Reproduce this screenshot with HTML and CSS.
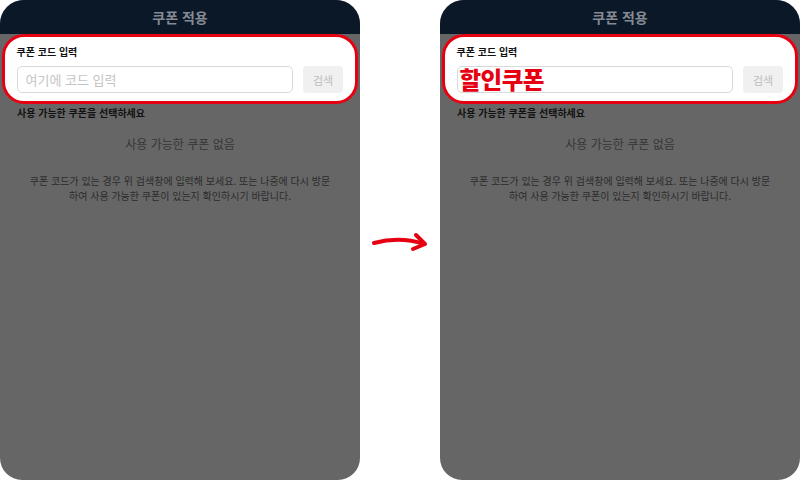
FILE: index.html
```html
<!DOCTYPE html>
<html lang="ko">
<head>
<meta charset="utf-8">
<link rel="stylesheet" href="styles.css">
</head>
<body>
<div class="stage">
  <section class="phone">
    <header class="phone-head">쿠폰 적용</header>
    <div class="code-box">
      <div class="code-label">쿠폰 코드 입력</div>
      <div class="code-row">
        <div class="code-input"><span class="placeholder">여기에 코드 입력</span></div>
        <div class="search-btn">검색</div>
      </div>
    </div>
    <div class="select-title">사용 가능한 쿠폰을 선택하세요</div>
    <div class="empty-title">사용 가능한 쿠폰 없음</div>
    <p class="empty-desc">쿠폰 코드가 있는 경우 위 검색창에 입력해 보세요. 또는 나중에 다시 방문<br>하여 사용 가능한 쿠폰이 있는지 확인하시기 바랍니다.</p>
  </section>
  <div class="arrow-col">
    <svg class="arrow" viewBox="360 220 80 40" width="80" height="40">
      <path d="M374 243 Q400 236 424 244" fill="none" stroke="#e60012" stroke-width="4" stroke-linecap="round"/>
      <path d="M416 235 L425 244 L413 249" fill="none" stroke="#e60012" stroke-width="4" stroke-linecap="round" stroke-linejoin="round"/>
    </svg>
  </div>
  <section class="phone">
    <header class="phone-head">쿠폰 적용</header>
    <div class="code-box">
      <div class="code-label">쿠폰 코드 입력</div>
      <div class="code-row">
        <div class="code-input code-input-filled"><span class="typed">할인쿠폰</span></div>
        <div class="search-btn">검색</div>
      </div>
    </div>
    <div class="select-title">사용 가능한 쿠폰을 선택하세요</div>
    <div class="empty-title">사용 가능한 쿠폰 없음</div>
    <p class="empty-desc">쿠폰 코드가 있는 경우 위 검색창에 입력해 보세요. 또는 나중에 다시 방문<br>하여 사용 가능한 쿠폰이 있는지 확인하시기 바랍니다.</p>
  </section>
</div>
</body>
</html>
```
FILE: styles.css
```css
html, body {
  margin: 0;
  padding: 0;
  background: #ffffff;
}
body {
  width: 800px;
  height: 480px;
  overflow: hidden;
  font-family: "Noto Sans CJK KR", "Noto Sans", sans-serif;
}
.stage {
  display: flex;
  width: 800px;
  height: 480px;
}
.phone {
  width: 360px;
  height: 480px;
  flex: none;
  background: #666666;
  border-radius: 24px 24px 22px 22px;
  overflow: hidden;
  display: flex;
  flex-direction: column;
}
.phone-head {
  height: 34px;
  flex: none;
  background: #0a1828;
  color: #868b93;
  font-size: 14px;
  font-weight: 700;
  display: flex;
  align-items: center;
  justify-content: center;
}
.code-box {
  margin: 0 2px;
  background: #ffffff;
  border: 3.5px solid #e60012;
  border-radius: 22px;
  padding: 8px 12px 8px 11.5px;
}
.code-label {
  font-size: 10px;
  font-weight: 700;
  color: #111111;
  line-height: 14px;
  height: 14px;
}
.code-row {
  display: flex;
  gap: 10px;
  margin-top: 7px;
  height: 27px;
}
.code-input {
  flex: 1;
  border: 1px solid #d9d9d9;
  border-radius: 5px;
  display: flex;
  align-items: center;
  padding: 0 8px;
  box-sizing: border-box;
}
.code-input-filled {
  padding: 0 2px;
}
.placeholder {
  color: #c4c4c4;
  font-size: 13px;
}
.typed {
  color: #e60012;
  font-size: 23.5px;
  font-weight: 900;
  line-height: 27px;
  letter-spacing: -0.5px;
}
.search-btn {
  width: 40px;
  flex: none;
  background: #f0f0f0;
  border-radius: 4px;
  color: #bdbdbd;
  font-size: 11px;
  display: flex;
  align-items: center;
  justify-content: center;
}
.select-title {
  padding: 2px 17px 0;
  font-size: 10px;
  font-weight: 700;
  color: #111111;
  line-height: 14px;
}
.empty-title {
  margin-top: 16px;
  text-align: center;
  font-size: 12px;
  color: #363636;
  line-height: 16px;
}
.empty-desc {
  margin: 22px 0 0;
  text-align: center;
  font-size: 10px;
  line-height: 14.6px;
  color: #2c2c2c;
}
.arrow-col {
  width: 80px;
  flex: none;
  display: flex;
  align-items: center;
}
.arrow {
  display: block;
}
```
